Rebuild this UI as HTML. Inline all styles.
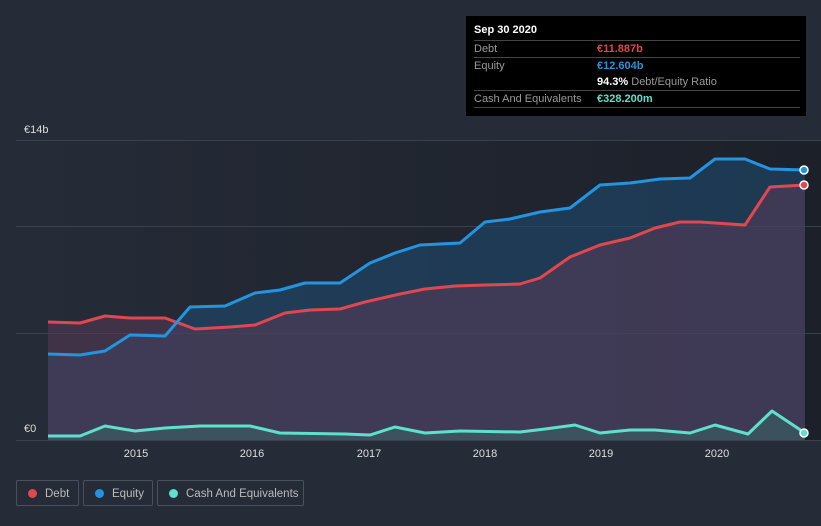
<!DOCTYPE html>
<html><head><meta charset="utf-8"><style>
body{margin:0;width:821px;height:526px;background:#252b37;font-family:"Liberation Sans",sans-serif;overflow:hidden;position:relative}
.tt{position:absolute;left:466px;top:16px;width:340px;height:100px;background:#000;color:#fff;font-size:11px}
.tt .h{position:absolute;left:8px;top:8px;font-weight:bold}
.row{position:absolute;left:8px;width:326px;border-top:1px solid #444;height:16px;line-height:16px}
.row span{position:absolute;left:0;color:#999}
.row b{position:absolute;left:123px;font-weight:bold;white-space:nowrap}
.leg{position:absolute;top:480px;height:26px;border:1px solid #4a505c;border-radius:2px;color:#bbb;font-size:11.5px;line-height:26px;box-sizing:border-box;white-space:nowrap}
.leg i{display:inline-block;width:9px;height:9px;border-radius:50%;margin:0 8px 0 11px;vertical-align:-1px}
</style></head><body>
<svg width="821" height="526" style="position:absolute;left:0;top:0">
<defs><linearGradient id="bg" x1="0" x2="1"><stop offset="0" stop-color="#252b37"/><stop offset="1" stop-color="#1c2029"/></linearGradient></defs>
<rect x="48" y="140" width="773" height="300" fill="url(#bg)"/>
<g stroke="#3a404c" stroke-width="1"><line x1="16" y1="140.5" x2="821" y2="140.5"/><line x1="16" y1="226.5" x2="821" y2="226.5"/><line x1="16" y1="333.5" x2="821" y2="333.5"/><line x1="16" y1="440.5" x2="821" y2="440.5"/></g>
<polygon fill="#1f4a6e" fill-opacity="0.6" points="48,354 80,355 105,351 130,335 165,336 190,307 225,306 255,293 280,290 305,283 340,283 370,263 395,253 420,245 460,243 485,222 510,219 540,212 570,208 600,185 630,183 660,179 690,178 715,159 745,159 770,169 805,170 805,440 48,440"/>
<polygon fill="#5a3a55" fill-opacity="0.55" points="48,322 80,323 105,316 130,318 165,318 195,329 230,327 255,325 285,313 310,310 340,309 365,302 400,294 425,289 455,286 485,285 520,284 540,278 570,257 600,245 630,238 655,228 680,222 700,222 745,225 770,187 805,185 805,440 48,440"/>
<polygon fill="#3a6a68" fill-opacity="0.5" points="48,436 80,436 105,426 135,431 165,428 200,426 250,426 280,433 345,434 370,435 395,427 425,433 460,431 520,432 545,429 575,425 600,433 630,430 655,430 690,433 715,425 748,434 772,411 805,433 805,440 48,440"/>
<g fill="none" stroke-width="3" stroke-linejoin="round">
<polyline stroke="#e0474f" points="48,322 80,323 105,316 130,318 165,318 195,329 230,327 255,325 285,313 310,310 340,309 365,302 400,294 425,289 455,286 485,285 520,284 540,278 570,257 600,245 630,238 655,228 680,222 700,222 745,225 770,187 805,185"/>
<polyline stroke="#2394df" points="48,354 80,355 105,351 130,335 165,336 190,307 225,306 255,293 280,290 305,283 340,283 370,263 395,253 420,245 460,243 485,222 510,219 540,212 570,208 600,185 630,183 660,179 690,178 715,159 745,159 770,169 805,170"/>
<polyline stroke="#5ee0cc" points="48,436 80,436 105,426 135,431 165,428 200,426 250,426 280,433 345,434 370,435 395,427 425,433 460,431 520,432 545,429 575,425 600,433 630,430 655,430 690,433 715,425 748,434 772,411 805,433"/>
</g>
<circle cx="804" cy="185" r="4" fill="#e0474f" stroke="#fff" stroke-width="1.5"/>
<circle cx="804" cy="170" r="4" fill="#2394df" stroke="#fff" stroke-width="1.5"/>
<circle cx="804" cy="433" r="4" fill="#5ee0cc" stroke="#fff" stroke-width="1.5"/>
<g fill="#ddd" font-size="11" font-family="Liberation Sans"><text x="24" y="133">€14b</text><text x="24" y="432">€0</text>
<g text-anchor="middle"><text x="136" y="457">2015</text><text x="252" y="457">2016</text><text x="369" y="457">2017</text><text x="485" y="457">2018</text><text x="601" y="457">2019</text><text x="717" y="457">2020</text></g></g>
</svg>
<div class="tt"><div class="h">Sep 30 2020</div>
<div class="row" style="top:24px"><span>Debt</span><b style="color:#e8434a">€11.887b</b></div>
<div class="row" style="top:41px;height:33px"><span>Equity</span><b style="color:#2394df">€12.604b</b><b style="top:16px;color:#fff">94.3% <span style="position:static;font-weight:normal;color:#999">Debt/Equity Ratio</span></b></div>
<div class="row" style="top:74px;border-bottom:1px solid #444"><span>Cash And Equivalents</span><b style="color:#5ee0cc">€328.200m</b></div>
</div>
<div class="leg" style="left:16px;width:63px"><i style="background:#e0474f"></i>Debt</div>
<div class="leg" style="left:83px;width:70px"><i style="background:#2394df"></i>Equity</div>
<div class="leg" style="left:157px;width:147px"><i style="background:#5ee0cc"></i>Cash And Equivalents</div>
</body></html>
